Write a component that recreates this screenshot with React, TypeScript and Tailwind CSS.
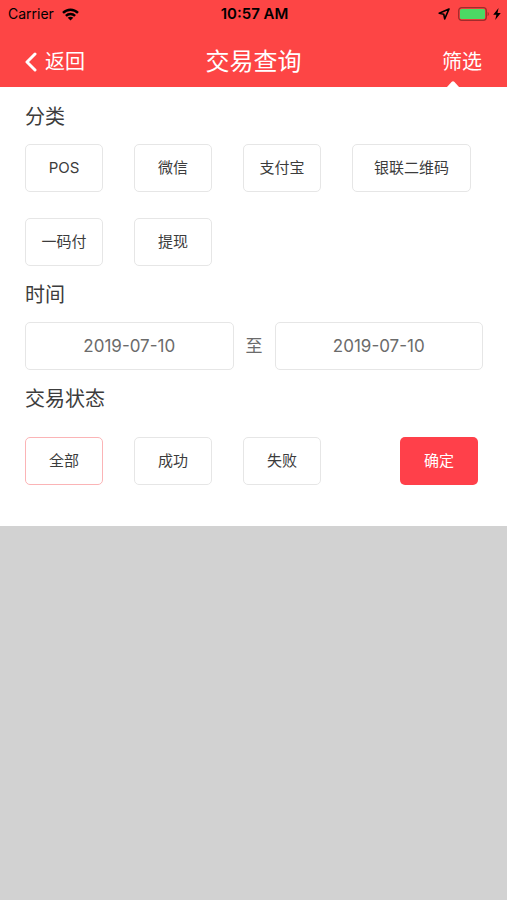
import { useState } from 'react';
import clsx from 'clsx';

const CATEGORIES = ['POS', '微信', '支付宝', '银联二维码', '一码付', '提现'];
const STATUSES = ['全部', '成功', '失败'];

interface OptionProps {
  label: string;
  active?: boolean;
  onClick: () => void;
}

function Option({ label, active = false, onClick }: OptionProps) {
  return (
    <button
      type="button"
      aria-pressed={active}
      onClick={onClick}
      className={clsx(
        'h-12 min-w-[78px] rounded-[5px] border bg-white text-[15px] leading-5 text-[#3c3c3c]',
        label.length > 3 ? 'px-[21px]' : 'px-3',
        active ? 'border-[#fbb4b6]' : 'border-[#e6e6e6]',
      )}
    >
      {label}
    </button>
  );
}

interface DateFieldProps {
  label: string;
  value: string;
  onChange: (value: string) => void;
}

function DateField({ label, value, onChange }: DateFieldProps) {
  return (
    <input
      type="text"
      aria-label={label}
      value={value}
      onChange={(e) => onChange(e.target.value)}
      className="h-12 w-full min-w-0 flex-1 rounded-[5px] border border-[#e6e6e6] bg-white text-center text-[17px] text-[#6b6b6b] outline-none"
    />
  );
}

function StatusBar() {
  return (
    <div className="grid h-7 grid-cols-[1fr_auto_1fr] items-center pr-1.5 pl-2 text-black">
      <div className="flex items-center gap-2">
        <span className="text-sm leading-5">Carrier</span>
        <svg width="17" height="13" viewBox="0 0 17 13" aria-hidden="true">
          <g fill="none" stroke="currentColor" strokeWidth="2.4">
            <path d="M1 4.9C5.2 .7 11.8 .7 16 4.9" />
            <path d="M3.9 7.9c2.6-2.5 6.6-2.5 9.2 0" />
          </g>
          <path d="M8.5 12.6 5.7 9.8c1.6-1.4 4-1.4 5.6 0z" fill="currentColor" />
        </svg>
      </div>
      <span className="text-[15px] leading-5 font-semibold">10:57 AM</span>
      <div className="flex items-center justify-end gap-2">
        <svg width="12" height="12" viewBox="0 0 12 12" aria-hidden="true">
          <path
            d="M11 1 1.2 5.3l4.6 1 .9 4.6z"
            fill="none"
            stroke="currentColor"
            strokeWidth="1.6"
            strokeLinejoin="round"
          />
        </svg>
        <div className="flex items-center gap-1">
          <svg width="31" height="14" viewBox="0 0 31 14" aria-hidden="true">
            <rect x=".7" y=".7" width="27.6" height="12.6" rx="3" fill="none" stroke="#a02c2b" strokeWidth="1.3" />
            <rect x="2" y="2" width="25" height="10" rx="1.5" fill="#4cd964" />
            <path d="M29.6 5c1.6.6 1.6 3.4 0 4z" fill="#a02c2b" />
          </svg>
          <svg width="8" height="12" viewBox="0 0 8 12" aria-hidden="true">
            <path d="M5.6 0 .2 6.7h3.2L2.2 12 7.8 5.1H4.5z" fill="currentColor" />
          </svg>
        </div>
      </div>
    </div>
  );
}

export default function App() {
  const [category, setCategory] = useState('');
  const [status, setStatus] = useState('全部');
  const [start, setStart] = useState('2019-07-10');
  const [end, setEnd] = useState('2019-07-10');

  return (
    <div className="flex min-h-screen flex-col bg-[#d2d2d2] font-[Inter,'Noto_Sans_CJK_SC',sans-serif]">
      <header className="relative bg-[#fd4545]">
        <StatusBar />
        <nav className="grid h-[59px] grid-cols-[1fr_auto_1fr] items-center px-[25px] pt-2 text-white">
          <button type="button" className="flex items-center gap-2 text-xl leading-7">
            <svg width="12" height="20" viewBox="0 0 12 20" aria-hidden="true">
              <path
                d="M10 2 2 10l8 8"
                fill="none"
                stroke="currentColor"
                strokeWidth="3"
                strokeLinecap="round"
                strokeLinejoin="round"
              />
            </svg>
            返回
          </button>
          <h1 className="text-2xl leading-7">交易查询</h1>
          <button type="button" className="justify-self-end text-xl leading-7">
            筛选
          </button>
        </nav>
        {/* Pointer from the filter button to its panel */}
        <svg
          className="absolute right-[47px] bottom-0"
          width="14"
          height="6"
          viewBox="0 0 14 6"
          aria-hidden="true"
        >
          <path d="M1 6 5.5 1Q7-.4 8.5 1L13 6z" fill="#fff" />
        </svg>
      </header>

      <main className="bg-white pt-4 pr-6 pb-[41px] pl-[25px]">
        <section>
          <h2 className="text-xl leading-7 text-[#3c3c3c]">分类</h2>
          <div className="mt-[13px] flex flex-wrap gap-x-[31px] gap-y-[26px]">
            {CATEGORIES.map((item) => (
              <Option key={item} label={item} active={item === category} onClick={() => setCategory(item)} />
            ))}
          </div>
        </section>

        <section className="mt-[15px]">
          <h2 className="text-xl leading-7 text-[#3c3c3c]">时间</h2>
          <div className="mt-[13px] flex items-center gap-3">
            <DateField label="开始日期" value={start} onChange={setStart} />
            <span className="text-[17px] leading-6 text-[#6b6b6b]">至</span>
            <DateField label="结束日期" value={end} onChange={setEnd} />
          </div>
        </section>

        <section className="mt-[15px]">
          <h2 className="text-xl leading-7 text-[#3c3c3c]">交易状态</h2>
          <div className="mt-6 flex gap-[31px] pr-[5px]">
            {STATUSES.map((item) => (
              <Option key={item} label={item} active={item === status} onClick={() => setStatus(item)} />
            ))}
            <button
              type="submit"
              className="ml-auto h-12 min-w-[78px] rounded-[5px] bg-[#ff404a] text-[15px] leading-5 text-white"
            >
              确定
            </button>
          </div>
        </section>
      </main>
    </div>
  );
}
